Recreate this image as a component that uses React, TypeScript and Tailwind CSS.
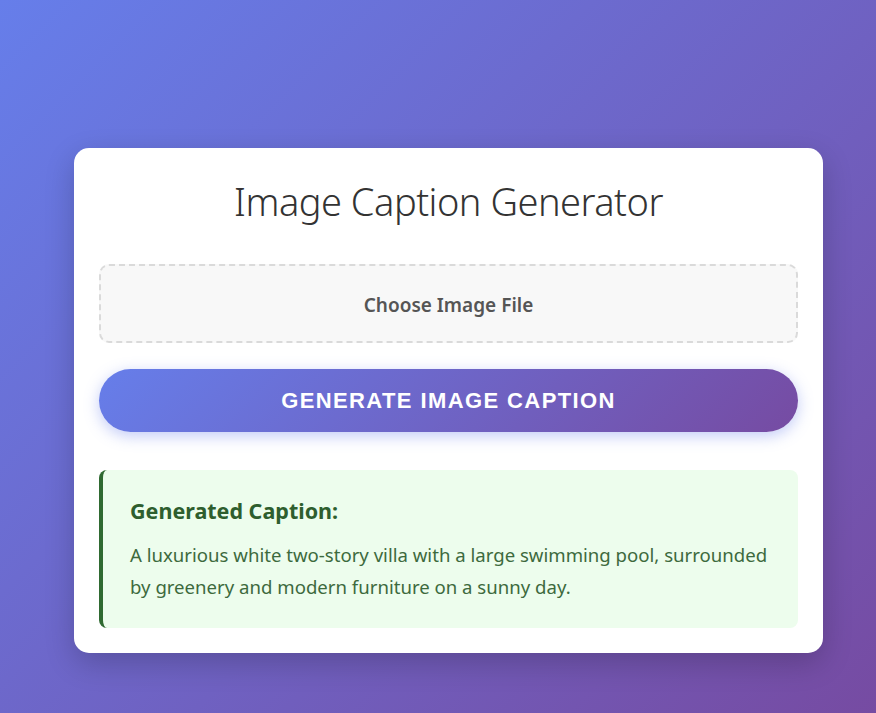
import React from "react";

const sans = { fontFamily: '"Noto Sans", "Open Sans", sans-serif' };

export default function App() {
  return (
    <div
      className="min-h-screen w-full bg-[linear-gradient(135deg,#667eea_0%,#764ba2_100%)] pt-[148px] pb-[61px]"
      style={sans}
    >
      <div className="ml-[74px] w-[749px] rounded-[15px] bg-white px-[25px] pt-[29px] pb-[25px] shadow-[0_10px_30px_rgba(0,0,0,0.2)]">
        <h1 className="mb-[39px] text-center text-[38px] font-light leading-[48px] tracking-[-0.5px] text-[#333]">
          Image Caption Generator
        </h1>

        <label className="flex h-[79px] cursor-pointer items-center justify-center rounded-[10px] border-2 border-dashed border-[#dadada] bg-[#f8f8f8] pt-[3px] text-[19px] font-semibold text-[#555]">
          Choose Image File
        </label>

        <button
          className="mt-[26px] flex h-[63px] w-full items-center justify-center rounded-full bg-[linear-gradient(135deg,#667eea_0%,#764ba2_100%)] text-[22px] font-bold uppercase tracking-[1.4px] text-white shadow-[0_4px_15px_rgba(102,126,234,0.4)]"
          style={{ fontFamily: '"Liberation Sans", Arial, sans-serif' }}
        >
          Generate Image Caption
        </button>

        <div className="mt-[38px] rounded-[8px] border-l-4 border-[#2f6a31] bg-[#edfded] pt-[29px] pr-[25px] pb-[25px] pl-[27px]">
          <h3 className="text-[21.5px] font-bold leading-[24px] text-[#2e5e2e]">
            Generated Caption:
          </h3>
          <p className="mt-[16px] text-[18.6px] leading-[32px] text-[#3d6a3d]">
            A luxurious white two-story villa with a large swimming pool, surrounded by greenery
            and modern furniture on a sunny day.
          </p>
        </div>
      </div>
    </div>
  );
}
